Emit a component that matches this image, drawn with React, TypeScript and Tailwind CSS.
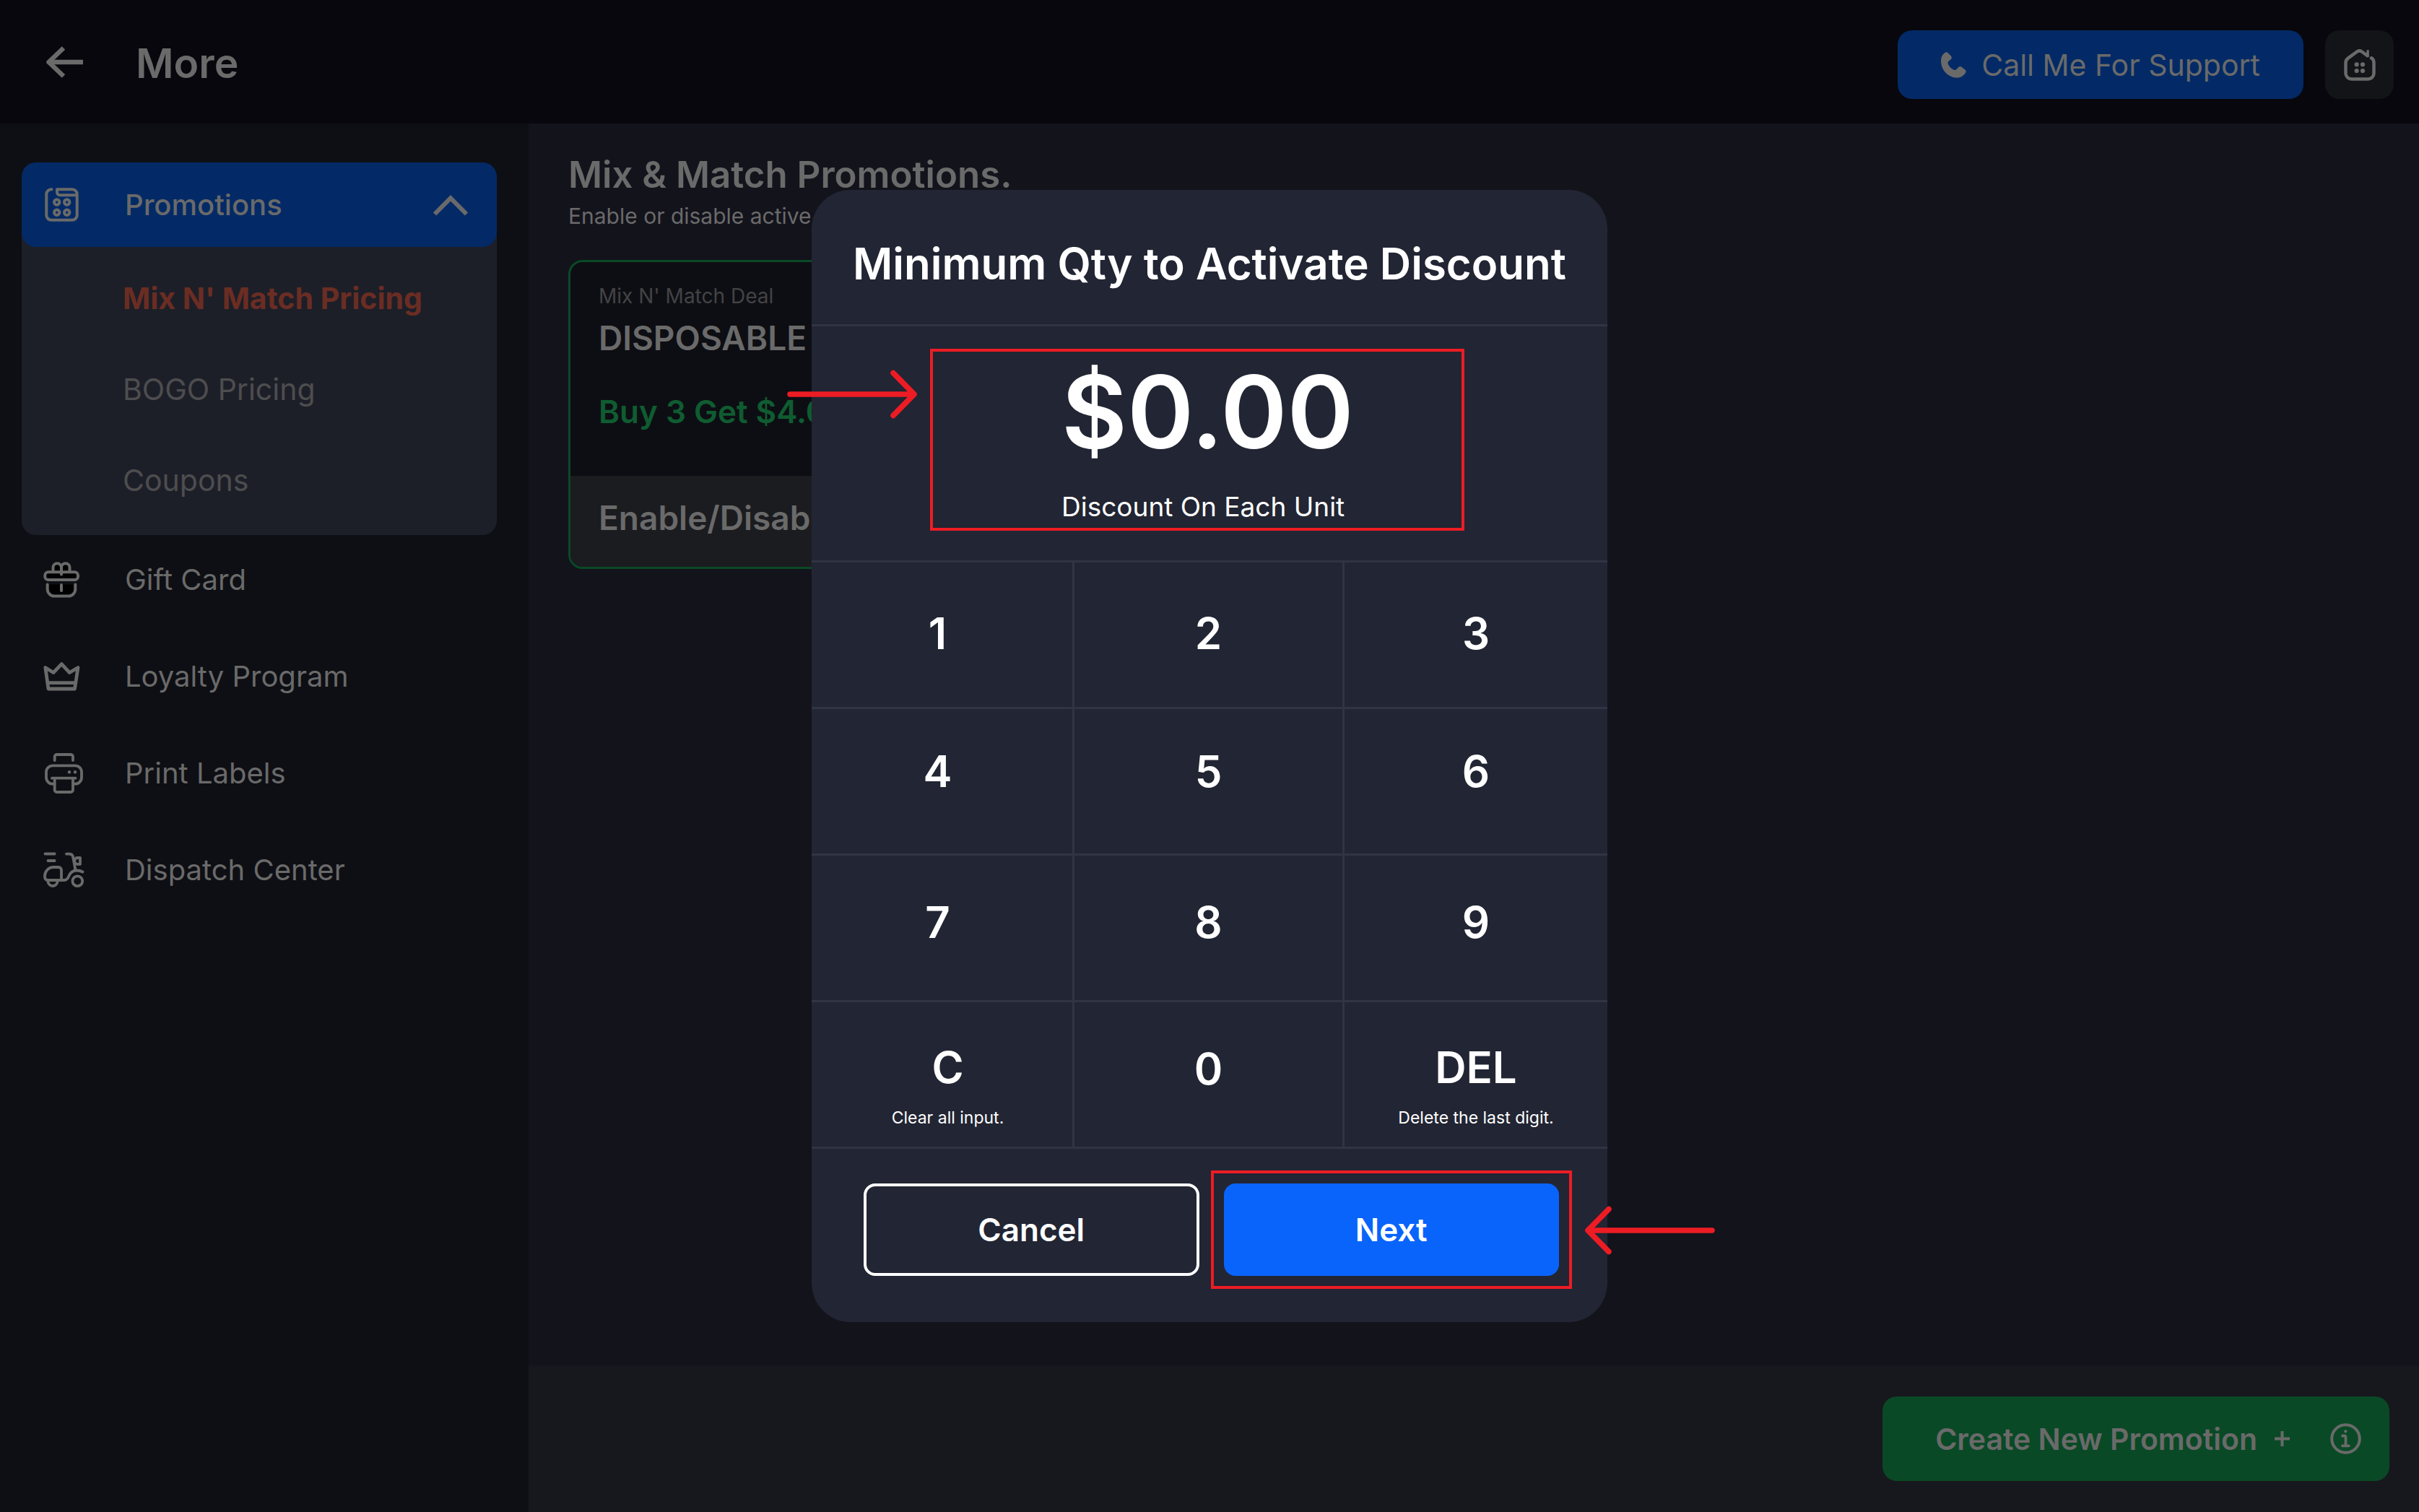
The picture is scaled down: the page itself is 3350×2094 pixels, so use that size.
import React from "react";

function BackArrow() {
  return (
    <svg width="52" height="44" viewBox="0 0 52 44" fill="none" stroke="currentColor" strokeWidth="6.5">
      <path d="M52 22H5" />
      <path d="M25 2.5 4.5 22 25 41.5" strokeLinejoin="round" />
    </svg>
  );
}

function PhoneIcon() {
  return (
    <svg width="36" height="36" viewBox="0 0 36 36" fill="currentColor">
      <path d="M5.5.9C7 0 8.7.2 9.8 1.4l4.2 4.4c1 1.2 1 2.7.1 3.9l-3.6 3.2c-1.1 1-1.3 2.4-.7 3.7 1.6 3.8 4.3 6.5 8 8.2 1.4.6 2.7.3 3.7-.8l3-3.2c1.1-1.1 2.6-1.2 3.8-.2l5.2 4.1c1.3 1 1.5 2.5.7 3.9-2.5 4.3-6.4 6.9-11.5 7.1C10 35.7 0 25 0 12.5 0 7 1.9 3.1 5.5.9z" />
    </svg>
  );
}

function HomeIcon() {
  return (
    <svg width="44" height="44" viewBox="0 0 44 44" fill="none" stroke="currentColor" strokeWidth="4.5" strokeLinecap="round">
      <path d="M38 12.3c2.5 1.5 3.5 3.5 3.5 6.5v14.7a8 8 0 0 1-8 8h-23a8 8 0 0 1-8-8V19c0-3 1-4.8 3.2-6.4L17.5 4a6.5 6.5 0 0 1 8 0l7 5.2" />
      <path d="M29 9.5 31.5 4V1.2h3.3v10z" fill="currentColor" stroke="none" />
      <g fill="currentColor" stroke="none">
        <circle cx="17.7" cy="21.3" r="3.1" />
        <circle cx="26" cy="21.3" r="3.1" />
        <circle cx="17.7" cy="30" r="3.1" />
        <circle cx="26" cy="30" r="3.1" />
      </g>
    </svg>
  );
}

function PromotionsIcon() {
  return (
    <svg width="52" height="47" viewBox="-2 0 52 47" fill="none" stroke="currentColor" strokeWidth="4" strokeLinecap="round" strokeLinejoin="round">
      <path d="M9.5 2.3H9A6.7 6.7 0 0 0 2.3 9v29a6.7 6.7 0 0 0 6.7 6.7h29a6.7 6.7 0 0 0 6.7-6.7V9A6.7 6.7 0 0 0 38 2.3H17v4a4 4 0 0 0 4 4h23.5" />
      <circle cx="16.7" cy="20" r="3.7" />
      <circle cx="30.7" cy="20" r="3.7" />
      <circle cx="16.7" cy="34.3" r="3.7" />
      <circle cx="30.7" cy="34.3" r="3.7" />
    </svg>
  );
}

function ChevronUp() {
  return (
    <svg width="48" height="30" viewBox="0 0 48 30" fill="none" stroke="currentColor" strokeWidth="6">
      <path d="M2 27.5 24 5.3l22 22.2" />
    </svg>
  );
}

function GiftIcon() {
  return (
    <svg width="56" height="50" viewBox="0 0 56 50" fill="#000" stroke="currentColor" strokeWidth="4" strokeLinecap="round" strokeLinejoin="round">
      <path d="M13.5 13V8A5.7 5.7 0 0 1 25 8v5" />
      <path d="M25 13V8a5.7 5.7 0 0 1 11.5 0v5" />
      <rect x="2.3" y="14.3" width="45.7" height="10.7" rx="4.5" />
      <path d="M25 12v5.5" />
      <path d="M5.7 31.5V38a9.5 9.5 0 0 0 9.5 9.5h19.6A9.5 9.5 0 0 0 44.3 38v-6.5" />
      <path d="M25 32v8" />
    </svg>
  );
}

function CrownIcon() {
  return (
    <svg width="56" height="40" viewBox="0 0 56 40" fill="none" stroke="currentColor" strokeWidth="4.8" strokeLinecap="round" strokeLinejoin="round">
      <path d="M2.8 7.5 14 14.5 25.3 2.6l11 11.9L48 7.5 43.5 37H7z" />
      <path d="M6 28.6h38.5" />
    </svg>
  );
}

function PrinterIcon() {
  return (
    <svg width="56" height="56" viewBox="-2 0 56 56" fill="none" stroke="currentColor" strokeWidth="3.8" strokeLinecap="round" strokeLinejoin="round">
      <path d="M13.7 10V5a3 3 0 0 1 3-3H36a3 3 0 0 1 3 3v5" />
      <path d="M13 42.7h-2a9 9 0 0 1-9-9v-7.4a9 9 0 0 1 9-9h31a9 9 0 0 1 9 9v7.4a9 9 0 0 1-9 9h-2" />
      <path d="M10 34.7h32.5" />
      <path d="M13.7 35v16a3 3 0 0 0 3 3H36a3 3 0 0 0 3-3V35" />
      <circle cx="34" cy="26.3" r="2.2" fill="currentColor" stroke="none" />
      <circle cx="42" cy="26.3" r="2.2" fill="currentColor" stroke="none" />
    </svg>
  );
}

function ScooterIcon() {
  return (
    <svg width="57" height="50" viewBox="0 0 57 50" fill="none" stroke="currentColor" strokeWidth="3.8" strokeLinecap="round" strokeLinejoin="round">
      <path d="M2.5 2.5h13.2M6.5 12h9.2" />
      <path d="M32 2.7h3.5c3 0 5 1.3 5.6 4L44.5 25" />
      <path d="M51 8h-4a4 4 0 0 0-3.7 4.3A4.3 4.3 0 0 0 47.5 16.8H51z" />
      <path d="M25 39V25a4 4 0 0 0-4-4h-7C7 21 2 27 2 33.5c0 3.5 1.2 5.5 4.5 5.5H29c3.5 0 4.8-2.2 6-5 2-5 5.5-8.5 11-8.5 3.5 0 6 .6 8.500 2" />
      <path d="M6.3 40a6.7 7 0 0 0 13.4 0" />
      <circle cx="47.3" cy="40.3" r="6.9" />
    </svg>
  );
}

function InfoIcon() {
  return (
    <svg width="43" height="43" viewBox="0 0 43 43" fill="none" stroke="currentColor" strokeWidth="4" strokeLinecap="round" strokeLinejoin="round">
      <circle cx="21.5" cy="21.5" r="19.3" />
      <circle cx="21.3" cy="11.3" r="2.1" fill="currentColor" stroke="none" />
      <path d="M17 17.5h2.5a2 2 0 0 1 2 2v11.8M17 31.3h8.8" strokeWidth="3.8" />
    </svg>
  );
}

function PointerArrow({ flip = false }: { flip?: boolean }) {
  return (
    <svg width="180" height="68" viewBox="0 0 180 68" fill="none" stroke="#ed1c24" strokeWidth="7.5" strokeLinecap="round" strokeLinejoin="round">
      {flip ? <path d="M176 34H4M33 4.5 4 34l29 29.5" /> : <path d="M4 34h172M147 4.5 176 34l-29 29.5" />}
    </svg>
  );
}

const subItems = ["BOGO Pricing", "Coupons"];

const navItems = [
  { label: "Gift Card", icon: <GiftIcon /> },
  { label: "Loyalty Program", icon: <CrownIcon /> },
  { label: "Print Labels", icon: <PrinterIcon /> },
  { label: "Dispatch Center", icon: <ScooterIcon /> },
];

const digitRows = [
  { digits: ["1", "2", "3"], pad: "pb-1" },
  { digits: ["4", "5", "6"], pad: "pb-7" },
  { digits: ["7", "8", "9"], pad: "pb-4" },
];

const columns = "grid grid-cols-[364fr_374fr_364fr] h-[203px] border-b-[3px] border-[#303444]";
const cell = "border-r-[3px] border-[#303444] last:border-r-0";

function Sidebar() {
  return (
    <nav className="w-[732px] shrink-0 bg-[#0e0f14] px-[30px] pt-[54px] text-[40px] leading-[48px]">
      <div className="mr-[14px] rounded-[20px] bg-[#1d1f28]">
        <button className="flex h-[117px] w-full items-center rounded-[20px] bg-[#032a66] pl-[30px] pr-10 font-medium">
          <span className="w-[113px]"><PromotionsIcon /></span>
          <span className="grow text-left">Promotions</span>
          <ChevronUp />
        </button>
        <div className="pb-[13px] pl-[140px] pt-2 text-[41px]">
          <a href="#" className="flex h-[126px] items-center font-bold text-[#6b2d23]">Mix N' Match Pricing</a>
          {subItems.map((label) => (
            <a key={label} href="#" className="flex h-[126px] items-center text-[#4d4d4f]">{label}</a>
          ))}
        </div>
      </div>
      <div className="flex flex-col gap-3 pt-px">
        {navItems.map(({ label, icon }) => (
          <a key={label} href="#" className="flex h-[122px] items-center pl-[30px]">
            <span className="w-[113px]">{icon}</span>
            {label}
          </a>
        ))}
      </div>
    </nav>
  );
}

function KeypadDialog() {
  return (
    <div className="fixed inset-0 flex items-center justify-center">
      <div role="dialog" aria-labelledby="dialog-title" className="w-[1102px] rounded-[54px] bg-[#222533] text-white">
        <div className="border-b-[3px] border-[#303444] pb-[52px] pt-[70px]">
          <h2 id="dialog-title" className="whitespace-nowrap text-center text-[60px] font-semibold leading-[64px]">
            Minimum Qty to Activate Discount
          </h2>
        </div>
        <div className="border-b-[3px] border-[#303444] px-[164px] pb-[41px] pt-[31px]">
          <div className="relative w-[740px] border-4 border-[#ed1c24] pb-[7px] pl-[178px] pt-[13px]">
            <div className="text-[140px] font-semibold leading-[140px]">$0.00</div>
            <div className="mt-10 text-[37px] leading-[44px]">Discount On Each Unit</div>
            <div className="absolute right-full top-[25px] mr-[22px]"><PointerArrow /></div>
          </div>
        </div>
        {digitRows.map(({ digits, pad }) => (
          <div key={digits[0]} className={columns}>
            {digits.map((d) => (
              <button key={d} className={`${cell} ${pad} text-[60px] font-semibold leading-[64px] first:pr-3`}>{d}</button>
            ))}
          </div>
        ))}
        <div className={columns}>
          <button className={`${cell} pl-4 pt-8`}>
            <span className="block text-[60px] font-semibold leading-[64px]">C</span>
            <span className="mt-6 block text-[23px] leading-[28px]">Clear all input.</span>
          </button>
          <button className={`${cell} pb-4 text-[60px] font-semibold leading-[64px]`}>0</button>
          <button className={`${cell} pt-8`}>
            <span className="block text-[60px] font-semibold leading-[64px]">DEL</span>
            <span className="mt-6 block text-[23px] leading-[28px]">Delete the last digit.</span>
          </button>
        </div>
        <div className="grid grid-cols-2 gap-[34px] pb-16 pl-[72px] pr-[67px] pt-12 text-[44px] font-semibold leading-[56px]">
          <button className="h-32 rounded-2xl border-4 border-white">Cancel</button>
          <div className="relative">
            <button className="h-32 w-full rounded-2xl bg-[#0964fb]">Next</button>
            <div className="pointer-events-none absolute -inset-[18px] border-4 border-[#ed1c24]" />
            <div className="absolute left-full top-[31px] ml-9"><PointerArrow flip /></div>
          </div>
        </div>
      </div>
    </div>
  );
}

export default function App() {
  return (
    <div className="flex min-h-screen flex-col bg-[#13131c] font-['Inter',sans-serif] text-[#6a6a6a]">
      <header className="flex h-[171px] items-center bg-[#08070d] pl-[63px] pr-[35px]">
        <button aria-label="Back"><BackArrow /></button>
        <h1 className="ml-[73px] grow pt-1 text-[57px] font-semibold leading-[64px]">More</h1>
        <div className="flex gap-[30px] pt-2">
          <button className="flex h-[95px] items-center gap-5 rounded-[20px] bg-[#032a66] px-[60px] text-[41px] leading-[48px]">
            <PhoneIcon />
            Call Me For Support
          </button>
          <button aria-label="Home" className="flex h-[95px] w-[95px] items-center justify-center rounded-[20px] bg-[#131418]">
            <HomeIcon />
          </button>
        </div>
      </header>
      <div className="flex grow">
        <Sidebar />
        <div className="flex grow flex-col">
          <main className="grow pl-[55px] pt-10">
            <h2 className="pt-px text-[51px] font-semibold leading-[60px]">Mix &amp; Match Promotions.</h2>
            <p className="mt-[9px] text-[30px] leading-[36px]">Enable or disable active promotions.</p>
            <section className="mt-[43px] w-[720px] overflow-hidden rounded-[20px] border-[3px] border-[#0a4926] bg-[#0d0e13]">
              <div className="px-[39px] pb-[62px] pt-[30px]">
                <p className="text-[28px] leading-[34px] text-[#434345]">Mix N' Match Deal</p>
                <h3 className="mt-[14px] text-[46px] font-semibold leading-[54px]">DISPOSABLE</h3>
                <p className="mt-12 text-[44px] font-semibold leading-[54px] text-[#0f5c31]">Buy 3 Get $4.00 Off</p>
              </div>
              <div className="flex h-[126px] items-center bg-[#1b1c20] px-[39px] pb-[10px] text-[46px] font-semibold leading-[54px]">
                Enable/Disable
              </div>
            </section>
          </main>
          <footer className="flex h-[203px] items-center justify-end bg-[#17181d] pr-[41px]">
            <button className="flex h-[117px] items-center rounded-[20px] bg-[#0a4926] pl-[73px] pr-[39px] text-[41px] font-semibold leading-[48px]">
              Create New Promotion
              <svg className="ml-6 mr-14" width="21" height="21" viewBox="0 0 21 21" stroke="currentColor" strokeWidth="4">
                <path d="M10.5 0v21M0 10.5h21" />
              </svg>
              <InfoIcon />
            </button>
          </footer>
        </div>
      </div>
      <KeypadDialog />
    </div>
  );
}
